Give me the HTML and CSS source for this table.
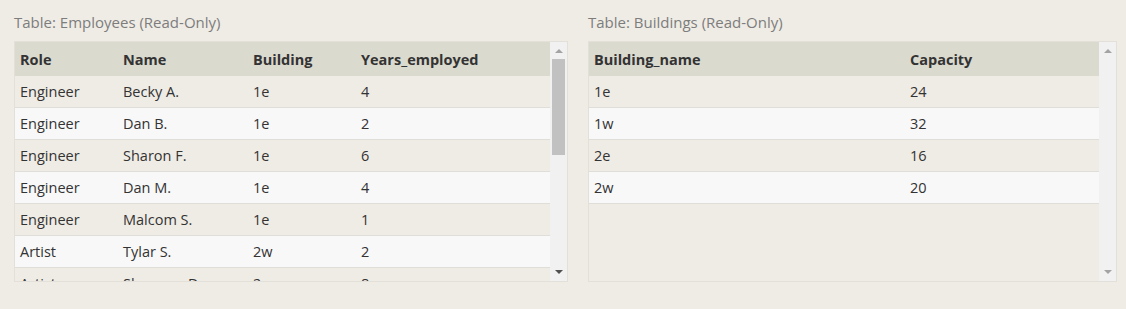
FILE: index.html
```html
<!DOCTYPE html>
<html>
<head>
<meta charset="utf-8">
<link rel="stylesheet" href="styles.css">
</head>
<body>
<div class="page">
  <section class="panel panel-emp">
    <div class="title">Table: Employees (Read-Only)</div>
    <div class="box">
      <div class="viewport">
        <table class="tbl emp">
          <thead>
            <tr><th>Role</th><th>Name</th><th>Building</th><th>Years_employed</th></tr>
          </thead>
          <tbody>
            <tr><td>Engineer</td><td>Becky A.</td><td>1e</td><td>4</td></tr>
            <tr><td>Engineer</td><td>Dan B.</td><td>1e</td><td>2</td></tr>
            <tr><td>Engineer</td><td>Sharon F.</td><td>1e</td><td>6</td></tr>
            <tr><td>Engineer</td><td>Dan M.</td><td>1e</td><td>4</td></tr>
            <tr><td>Engineer</td><td>Malcom S.</td><td>1e</td><td>1</td></tr>
            <tr><td>Artist</td><td>Tylar S.</td><td>2w</td><td>2</td></tr>
            <tr><td>Artist</td><td>Sherman D.</td><td>2w</td><td>8</td></tr>
            <tr><td>Artist</td><td>Jakob J.</td><td>2w</td><td>6</td></tr>
          </tbody>
        </table>
      </div>
      <div class="sbar">
        <span class="arrow up disabled"></span>
        <div class="track"><div class="thumb"></div></div>
        <span class="arrow down"></span>
      </div>
    </div>
  </section>
  <section class="panel panel-bld">
    <div class="title">Table: Buildings (Read-Only)</div>
    <div class="box">
      <div class="viewport">
        <table class="tbl bld">
          <thead>
            <tr><th>Building_name</th><th>Capacity</th></tr>
          </thead>
          <tbody>
            <tr><td>1e</td><td>24</td></tr>
            <tr><td>1w</td><td>32</td></tr>
            <tr><td>2e</td><td>16</td></tr>
            <tr><td>2w</td><td>20</td></tr>
          </tbody>
        </table>
      </div>
      <div class="sbar">
        <span class="arrow up disabled"></span>
        <div class="track"></div>
        <span class="arrow down disabled"></span>
      </div>
    </div>
  </section>
</div>
</body>
</html>
```
FILE: styles.css
```css
html, body {
  margin: 0;
  padding: 0;
  background: #efece5;
}
body {
  font-family: "Open Sans", "Noto Sans", sans-serif;
  font-size: 14px;
  color: #333;
}
.page {
  display: grid;
  grid-template-columns: 554px 529px;
  column-gap: 20px;
  padding: 12px 0 0 14px;
}
.title {
  color: #7d7d7d;
  font-size: 15px;
  line-height: 20px;
  height: 20px;
  margin-bottom: 9px;
  white-space: nowrap;
}
.box {
  display: flex;
  height: 239px;
  border: 1px solid #e2e0d8;
  background: #efece5;
}
.viewport {
  flex: 1;
  overflow: hidden;
}
.tbl {
  width: 100%;
  border-collapse: collapse;
  table-layout: fixed;
}
.tbl th {
  background: #dbdacf;
  color: #333;
  font-weight: 700;
  font-size: 14.5px;
  text-align: left;
  height: 34px;
  padding: 0 0 0 5px;
  white-space: nowrap;
}
.tbl td {
  height: 31px;
  padding: 0 0 0 5px;
  border-bottom: 1px solid #e0ded8;
  white-space: nowrap;
  color: #333;
  font-size: 14.5px;
}
.tbl tbody tr:nth-child(odd) td { background: #efece5; }
.tbl tbody tr:nth-child(even) td { background: #f8f8f8; }
.emp th:nth-child(1) { width: 98px; }
.emp th:nth-child(2) { width: 125px; }
.emp th:nth-child(3) { width: 103px; }
.bld th:nth-child(1) { width: 311px; }

.sbar {
  width: 17px;
  flex: none;
  background: #f1f1f1;
  display: flex;
  flex-direction: column;
  align-items: center;
}
.arrow {
  flex: none;
  width: 0;
  height: 0;
  border-left: 4px solid transparent;
  border-right: 4px solid transparent;
}
.arrow.up {
  margin-top: 7px;
  margin-bottom: 5px;
  border-bottom: 4px solid #505050;
}
.arrow.down {
  margin-top: 5px;
  margin-bottom: 7px;
  border-top: 4px solid #505050;
}
.arrow.up.disabled { border-bottom-color: #a3a3a3; }
.arrow.down.disabled { border-top-color: #a3a3a3; }
.track {
  flex: 1;
  width: 100%;
  display: flex;
  justify-content: center;
  padding-top: 1px;
}
.thumb {
  width: 13px;
  height: 96px;
  background: #c1c1c1;
}
```
